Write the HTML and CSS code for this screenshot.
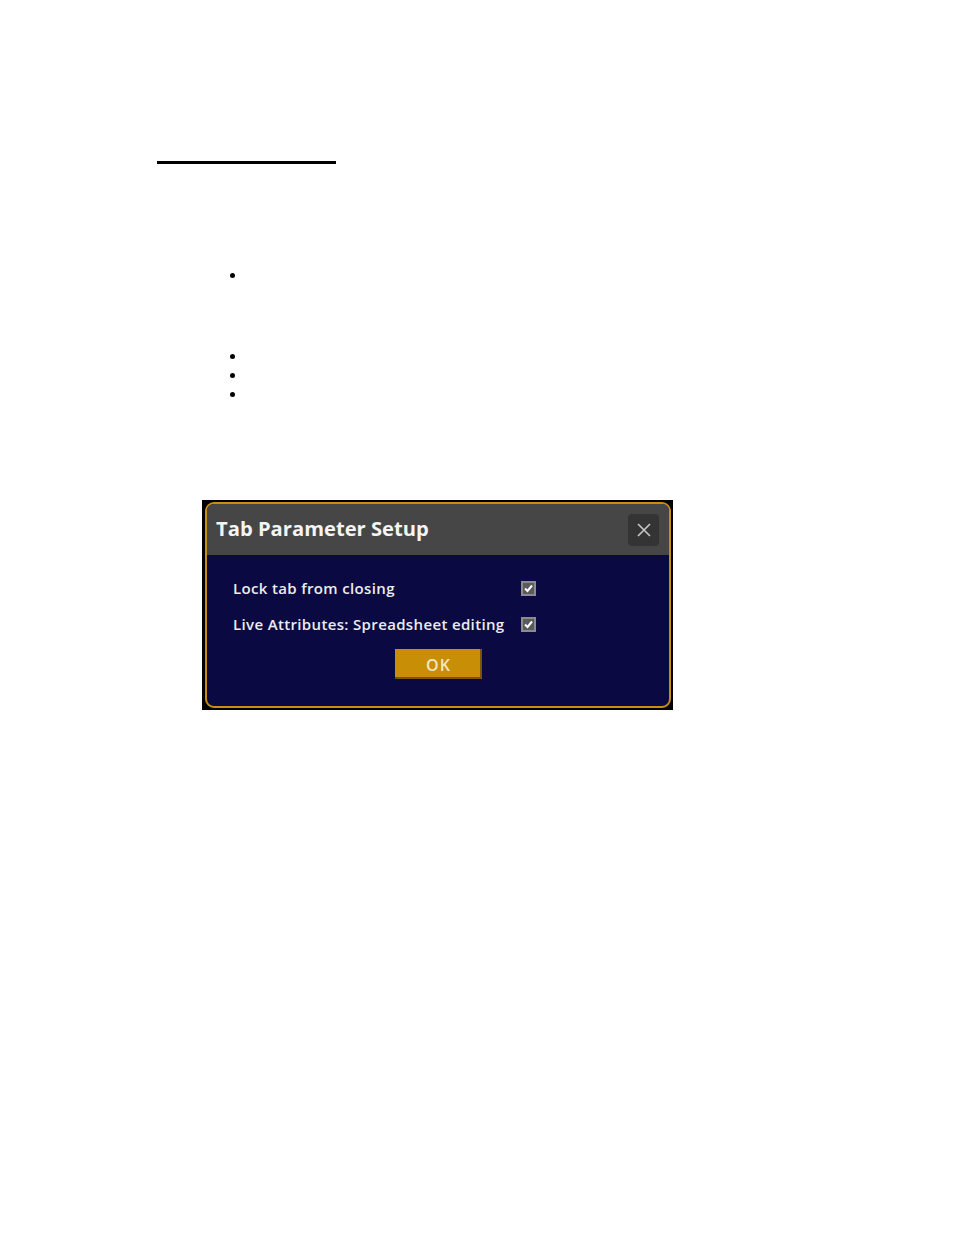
FILE: index.html
```html
<!DOCTYPE html>
<html>
<head>
<meta charset="utf-8">
<link rel="stylesheet" href="styles.css">
</head>
<body>
<div class="rule"></div>
<ul class="bullets">
  <li class="b1"><span class="dot"></span></li>
  <li class="b2"><span class="dot"></span></li>
  <li class="b3"><span class="dot"></span></li>
  <li class="b3"><span class="dot"></span></li>
</ul>
<div class="frame">
  <div class="dialog">
    <div class="header">
      <div class="title">Tab Parameter Setup</div>
      <div class="close">
        <svg width="16" height="16" viewBox="0 0 16 16"><path d="M2 2 L14 14 M14 2 L2 14" stroke="#c8c8c8" stroke-width="1.6" fill="none"/></svg>
      </div>
    </div>
    <div class="content">
      <div class="rows">
        <div class="label">Lock tab from closing</div>
        <div class="check"><svg width="11" height="11" viewBox="0 0 11 11"><path d="M2 5.5 L4.5 8 L9 2.5" stroke="#fff" stroke-width="2" fill="none"/></svg></div>
        <div class="label">Live Attributes: Spreadsheet editing</div>
        <div class="check"><svg width="11" height="11" viewBox="0 0 11 11"><path d="M2 5.5 L4.5 8 L9 2.5" stroke="#fff" stroke-width="2" fill="none"/></svg></div>
      </div>
      <div class="ok">OK</div>
    </div>
  </div>
</div>
</body>
</html>
```
FILE: styles.css
```css
html, body {
  margin: 0;
  padding: 0;
  background: #fff;
}
body {
  font-family: "Open Sans", "Liberation Sans", sans-serif;
}
.rule {
  margin: 161px 0 0 157px;
  width: 179px;
  height: 3px;
  background: #000;
}
.bullets {
  list-style: none;
  margin: 0;
  padding: 0 0 0 230px;
}
.bullets li {
  height: 5px;
  display: flex;
}
.bullets .b1 { margin-top: 109px; }
.bullets .b2 { margin-top: 76px; }
.bullets .b3 { margin-top: 14px; }
.dot {
  width: 5px;
  height: 5px;
  border-radius: 50%;
  background: #000;
}
.frame {
  margin: 103px 0 0 202px;
  width: 471px;
  height: 210px;
  box-sizing: border-box;
  padding: 2px 2px 2px 3px;
  background: #000;
}
.dialog {
  height: 100%;
  box-sizing: border-box;
  border: 2px solid #c68f0d;
  border-radius: 9px;
  background: #0b0942;
  overflow: hidden;
  display: flex;
  flex-direction: column;
}
.header {
  height: 51px;
  flex: none;
  background: #464646;
  display: flex;
  align-items: center;
  justify-content: space-between;
  padding: 0 10px 0 9px;
}
.title {
  color: #f4f4f4;
  font-weight: 700;
  font-size: 20.2px;
  margin-bottom: 4px;
}
.close {
  width: 31px;
  height: 32px;
  border-radius: 4px;
  background: #343434;
  display: flex;
  align-items: center;
  justify-content: center;
}
.content {
  padding: 15px 0 0 26px;
  display: flex;
  flex-direction: column;
}
.rows {
  display: grid;
  grid-template-columns: 288px 15px;
  grid-auto-rows: 36px;
  align-items: center;
}
.label {
  color: #ececec;
  font-size: 15px;
  font-weight: 600;
  letter-spacing: 0.35px;
}
.check {
  width: 15px;
  height: 15px;
  box-sizing: border-box;
  border: 2px solid #8c8c8c;
  background: #5a5a5a;
  display: flex;
  align-items: center;
  justify-content: center;
}
.ok {
  align-self: flex-start;
  margin: 7px 0 0 162px;
  width: 87px;
  height: 30px;
  box-sizing: border-box;
  background: #c88e06;
  box-shadow: inset -2px -2px 0 #7a5500;
  color: #f3e6c8;
  font-size: 16px;
  font-weight: 600;
  letter-spacing: 1px;
  padding-top: 2px;
  display: flex;
  align-items: center;
  justify-content: center;
}
```
